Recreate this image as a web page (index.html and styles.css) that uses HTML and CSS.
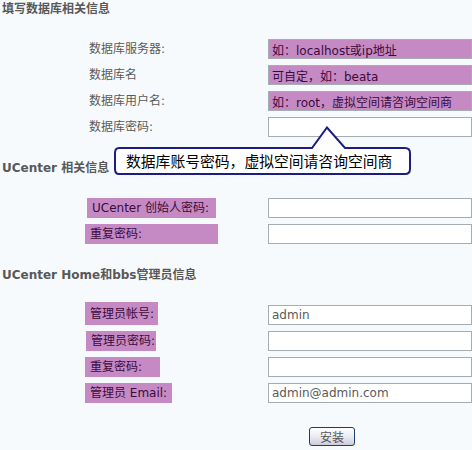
FILE: index.html
```html
<!DOCTYPE html>
<html lang="zh-CN">
<head>
    <meta charset="UTF-8">
    <title>安装 - 填写数据库相关信息</title>
    <link rel="stylesheet" href="styles.css">
</head>
<body>
    <div class="page">
        <h3 class="sec-title">填写数据库相关信息</h3>
        <div class="rows">
            <div class="row">
                <label class="lbl">数据库服务器:</label>
                <input class="txt hint" type="text" value="如：localhost或ip地址">
            </div>
            <div class="row">
                <label class="lbl">数据库名</label>
                <input class="txt hint" type="text" value="可自定，如：beata">
            </div>
            <div class="row">
                <label class="lbl">数据库用户名:</label>
                <input class="txt hint" type="text" value="如：root，虚拟空间请咨询空间商">
            </div>
            <div class="row">
                <label class="lbl">数据库密码:</label>
                <input class="txt" type="password" value="">
            </div>
        </div>

        <h3 class="sec-title">UCenter 相关信息</h3>
        <div class="rows">
            <div class="row">
                <span><label class="lbl hl w-129">UCenter 创始人密码:</label></span>
                <input class="txt" type="password" value="">
            </div>
            <div class="row">
                <span><label class="lbl hl w-133">重复密码:</label></span>
                <input class="txt" type="password" value="">
            </div>
        </div>

        <h3 class="sec-title">UCenter Home和bbs管理员信息</h3>
        <div class="rows">
            <div class="row">
                <span><label class="lbl hl w-73 tall">管理员帐号:</label></span>
                <input class="txt" type="text" value="admin">
            </div>
            <div class="row">
                <span><label class="lbl hl w-70">管理员密码:</label></span>
                <input class="txt" type="password" value="">
            </div>
            <div class="row">
                <span><label class="lbl hl w-75">重复密码:</label></span>
                <input class="txt" type="password" value="">
            </div>
            <div class="row">
                <span><label class="lbl hl w-87">管理员 Email:</label></span>
                <input class="txt" type="text" value="admin@admin.com">
            </div>
        </div>

        <div class="row submit-row">
            <span></span>
            <div><button class="btn" type="submit">安装</button></div>
        </div>

        <!-- callout pointing at the password box -->
        <div class="tip">
            <svg class="tip-shape" width="298" height="50" viewBox="0 0 298 50">
                <path d="M5 22 L198 22 L213 1.5 L231 22 L291 22 Q296 22 296 27 L296 43 Q296 48 291 48 L5 48 Q1 48 1 43 L1 27 Q1 22 5 22 Z"
                      fill="#fff" stroke="#1c1c82" stroke-width="2"/>
            </svg>
            <span class="tip-text">数据库账号密码，虚拟空间请咨询空间商</span>
        </div>
    </div>
</body>
</html>
```

FILE: styles.css
```css
/* Reset */
* {
    margin: 0;
    padding: 0;
    box-sizing: border-box;
}

body {
    font-family: 'DejaVu Sans', 'Noto Sans CJK SC', sans-serif;
    font-size: 12px;
    background-color: #f6fafd;
    color: #555;
}

.page {
    position: relative;
    width: 472px;
    height: 450px;
}

.sec-title {
    font-size: 12px;
    font-weight: bold;
    line-height: 18px;
    color: #585858;
    padding-left: 2px;
    margin-top: 22px;
}

.sec-title:first-child {
    margin-top: 0;
}

.rows {
    display: flex;
    flex-direction: column;
    gap: 6px;
    margin-top: 21px;
}

.row {
    display: grid;
    grid-template-columns: 183px 204px;
    align-items: center;
    height: 20px;
    padding-left: 85px;
}

.lbl {
    display: inline-block;
    padding-left: 4px;
    line-height: 16px;
    color: #5a5a5a;
}

/* highlighted labels */
.hl {
    background-color: #c58ac4;
    color: #3c0a3c;
    padding: 2px 0 2px 5px;
}

.hl.tall {
    margin-top: -3px;
    padding-top: 4px;
    padding-bottom: 3px;
}

.w-70 { width: 70px; margin-left: 1px; }
.w-73 { width: 73px; }
.w-75 { width: 75px; }
.w-87 { width: 87px; }
.w-129 { width: 129px; margin-left: 2px; }
.w-133 { width: 133px; }

.txt {
    width: 204px;
    height: 20px;
    border: 1px solid #a5acb2;
    background-color: #fff;
    padding: 0 3px;
    font-family: 'DejaVu Sans', 'Noto Sans CJK SC', sans-serif;
    font-size: 12px;
    color: #5a5a5a;
    outline: none;
}

.txt.hint {
    background-color: #c58ac4;
    color: #3c0a3c;
}

.submit-row {
    margin-top: 24px;
    height: 18px;
}

.btn {
    margin-left: 41px;
    width: 46px;
    height: 19px;
    border: 1px solid #1d3b6c;
    border-radius: 3px;
    background: linear-gradient(#ffffff, #ebebf3 50%, #cbcbde);
    font-family: 'DejaVu Sans', 'Noto Sans CJK SC', sans-serif;
    font-size: 12px;
    color: #555;
    cursor: pointer;
}

.tip {
    position: absolute;
    left: 114px;
    top: 126px;
    width: 298px;
    height: 50px;
}

.tip-shape {
    display: block;
}

.tip-text {
    position: absolute;
    left: 12px;
    top: 25px;
    line-height: 20px;
    font-family: 'Noto Sans CJK SC', sans-serif;
    font-size: 14.8px;
    color: #000;
    white-space: nowrap;
}
```
